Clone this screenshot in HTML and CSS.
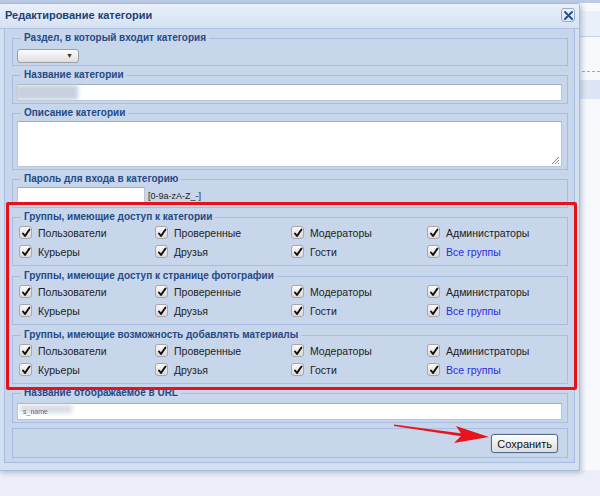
FILE: index.html
```html
<!DOCTYPE html>
<html>
<head>
	<title>Редактирование категории</title>
	<meta charset="utf-8">
	<link rel="stylesheet" href="styles.css">
</head>
<body>

	<!-- page behind the dialog -->
	<div class="page">
		<div class="page__top"></div>
		<div class="page__gap"></div>
		<div class="page__head"></div>
		<div class="page__white"></div>
		<div class="page__dash"></div>
		<div class="page__gap"></div>
		<div class="page__band"></div>
		<div class="page__rest"></div>
	</div>

	<div class="dialog">
		<div class="dialog__title">
			Редактирование категории
			<span class="dialog__close">
				<svg width="9" height="9" viewBox="0 0 9 9"><path d="M1 1 L8 8 M8 1 L1 8" stroke="#284f8c" stroke-width="2" stroke-linecap="round"/></svg>
			</span>
		</div>

		<div class="dialog__body">

			<fieldset class="fs">
				<legend>Раздел, в который входит категория</legend>
				<div class="select"><span class="select__arrow">&#9660;</span></div>
			</fieldset>

			<fieldset class="fs">
				<legend>Название категории</legend>
				<div class="input input--wide"><span class="blur blur--name"></span></div>
			</fieldset>

			<fieldset class="fs">
				<legend>Описание категории</legend>
				<div class="textarea">
					<svg class="grip" width="9" height="9" viewBox="0 0 9 9"><path d="M8 1 L1 8 M8 4 L4 8 M8 7 L7 8" stroke="#8a8a8a" stroke-width="1"/></svg>
				</div>
			</fieldset>

			<fieldset class="fs fs--pass">
				<legend>Пароль для входа в категорию</legend>
				<div class="row">
					<div class="input input--short"></div>
					<span class="hint">[0-9a-zA-Z_-]</span>
				</div>
			</fieldset>

			<fieldset class="fs fs--groups">
				<legend>Группы, имеющие доступ к категории</legend>
				<div class="groups">
					<label class="chk"><span class="chk__box"><svg width="10" height="10" viewBox="0 0 10 10"><path d="M2 5.5 L4 8 L8.5 1.5" fill="none" stroke="#111" stroke-width="2" stroke-linecap="round" stroke-linejoin="round"/></svg></span>Пользователи</label>
					<label class="chk"><span class="chk__box"><svg width="10" height="10" viewBox="0 0 10 10"><path d="M2 5.5 L4 8 L8.5 1.5" fill="none" stroke="#111" stroke-width="2" stroke-linecap="round" stroke-linejoin="round"/></svg></span>Проверенные</label>
					<label class="chk"><span class="chk__box"><svg width="10" height="10" viewBox="0 0 10 10"><path d="M2 5.5 L4 8 L8.5 1.5" fill="none" stroke="#111" stroke-width="2" stroke-linecap="round" stroke-linejoin="round"/></svg></span>Модераторы</label>
					<label class="chk"><span class="chk__box"><svg width="10" height="10" viewBox="0 0 10 10"><path d="M2 5.5 L4 8 L8.5 1.5" fill="none" stroke="#111" stroke-width="2" stroke-linecap="round" stroke-linejoin="round"/></svg></span>Администраторы</label>
					<label class="chk"><span class="chk__box"><svg width="10" height="10" viewBox="0 0 10 10"><path d="M2 5.5 L4 8 L8.5 1.5" fill="none" stroke="#111" stroke-width="2" stroke-linecap="round" stroke-linejoin="round"/></svg></span>Курьеры</label>
					<label class="chk"><span class="chk__box"><svg width="10" height="10" viewBox="0 0 10 10"><path d="M2 5.5 L4 8 L8.5 1.5" fill="none" stroke="#111" stroke-width="2" stroke-linecap="round" stroke-linejoin="round"/></svg></span>Друзья</label>
					<label class="chk"><span class="chk__box"><svg width="10" height="10" viewBox="0 0 10 10"><path d="M2 5.5 L4 8 L8.5 1.5" fill="none" stroke="#111" stroke-width="2" stroke-linecap="round" stroke-linejoin="round"/></svg></span>Гости</label>
					<label class="chk chk--all"><span class="chk__box"><svg width="10" height="10" viewBox="0 0 10 10"><path d="M2 5.5 L4 8 L8.5 1.5" fill="none" stroke="#111" stroke-width="2" stroke-linecap="round" stroke-linejoin="round"/></svg></span>Все группы</label>
				</div>
			</fieldset>

			<fieldset class="fs fs--groups">
				<legend>Группы, имеющие доступ к странице фотографии</legend>
				<div class="groups">
					<label class="chk"><span class="chk__box"><svg width="10" height="10" viewBox="0 0 10 10"><path d="M2 5.5 L4 8 L8.5 1.5" fill="none" stroke="#111" stroke-width="2" stroke-linecap="round" stroke-linejoin="round"/></svg></span>Пользователи</label>
					<label class="chk"><span class="chk__box"><svg width="10" height="10" viewBox="0 0 10 10"><path d="M2 5.5 L4 8 L8.5 1.5" fill="none" stroke="#111" stroke-width="2" stroke-linecap="round" stroke-linejoin="round"/></svg></span>Проверенные</label>
					<label class="chk"><span class="chk__box"><svg width="10" height="10" viewBox="0 0 10 10"><path d="M2 5.5 L4 8 L8.5 1.5" fill="none" stroke="#111" stroke-width="2" stroke-linecap="round" stroke-linejoin="round"/></svg></span>Модераторы</label>
					<label class="chk"><span class="chk__box"><svg width="10" height="10" viewBox="0 0 10 10"><path d="M2 5.5 L4 8 L8.5 1.5" fill="none" stroke="#111" stroke-width="2" stroke-linecap="round" stroke-linejoin="round"/></svg></span>Администраторы</label>
					<label class="chk"><span class="chk__box"><svg width="10" height="10" viewBox="0 0 10 10"><path d="M2 5.5 L4 8 L8.5 1.5" fill="none" stroke="#111" stroke-width="2" stroke-linecap="round" stroke-linejoin="round"/></svg></span>Курьеры</label>
					<label class="chk"><span class="chk__box"><svg width="10" height="10" viewBox="0 0 10 10"><path d="M2 5.5 L4 8 L8.5 1.5" fill="none" stroke="#111" stroke-width="2" stroke-linecap="round" stroke-linejoin="round"/></svg></span>Друзья</label>
					<label class="chk"><span class="chk__box"><svg width="10" height="10" viewBox="0 0 10 10"><path d="M2 5.5 L4 8 L8.5 1.5" fill="none" stroke="#111" stroke-width="2" stroke-linecap="round" stroke-linejoin="round"/></svg></span>Гости</label>
					<label class="chk chk--all"><span class="chk__box"><svg width="10" height="10" viewBox="0 0 10 10"><path d="M2 5.5 L4 8 L8.5 1.5" fill="none" stroke="#111" stroke-width="2" stroke-linecap="round" stroke-linejoin="round"/></svg></span>Все группы</label>
				</div>
			</fieldset>

			<fieldset class="fs fs--groups">
				<legend>Группы, имеющие возможность добавлять материалы</legend>
				<div class="groups">
					<label class="chk"><span class="chk__box"><svg width="10" height="10" viewBox="0 0 10 10"><path d="M2 5.5 L4 8 L8.5 1.5" fill="none" stroke="#111" stroke-width="2" stroke-linecap="round" stroke-linejoin="round"/></svg></span>Пользователи</label>
					<label class="chk"><span class="chk__box"><svg width="10" height="10" viewBox="0 0 10 10"><path d="M2 5.5 L4 8 L8.5 1.5" fill="none" stroke="#111" stroke-width="2" stroke-linecap="round" stroke-linejoin="round"/></svg></span>Проверенные</label>
					<label class="chk"><span class="chk__box"><svg width="10" height="10" viewBox="0 0 10 10"><path d="M2 5.5 L4 8 L8.5 1.5" fill="none" stroke="#111" stroke-width="2" stroke-linecap="round" stroke-linejoin="round"/></svg></span>Модераторы</label>
					<label class="chk"><span class="chk__box"><svg width="10" height="10" viewBox="0 0 10 10"><path d="M2 5.5 L4 8 L8.5 1.5" fill="none" stroke="#111" stroke-width="2" stroke-linecap="round" stroke-linejoin="round"/></svg></span>Администраторы</label>
					<label class="chk"><span class="chk__box"><svg width="10" height="10" viewBox="0 0 10 10"><path d="M2 5.5 L4 8 L8.5 1.5" fill="none" stroke="#111" stroke-width="2" stroke-linecap="round" stroke-linejoin="round"/></svg></span>Курьеры</label>
					<label class="chk"><span class="chk__box"><svg width="10" height="10" viewBox="0 0 10 10"><path d="M2 5.5 L4 8 L8.5 1.5" fill="none" stroke="#111" stroke-width="2" stroke-linecap="round" stroke-linejoin="round"/></svg></span>Друзья</label>
					<label class="chk"><span class="chk__box"><svg width="10" height="10" viewBox="0 0 10 10"><path d="M2 5.5 L4 8 L8.5 1.5" fill="none" stroke="#111" stroke-width="2" stroke-linecap="round" stroke-linejoin="round"/></svg></span>Гости</label>
					<label class="chk chk--all"><span class="chk__box"><svg width="10" height="10" viewBox="0 0 10 10"><path d="M2 5.5 L4 8 L8.5 1.5" fill="none" stroke="#111" stroke-width="2" stroke-linecap="round" stroke-linejoin="round"/></svg></span>Все группы</label>
				</div>
			</fieldset>

			<fieldset class="fs fs--url">
				<legend>Название отображаемое в URL</legend>
				<div class="input input--wide input--url"><span class="blur blur--url"></span><span class="url-text">s_name</span></div>
			</fieldset>

			<fieldset class="fs fs--buttons">
				<button class="btn" type="button">Сохранить</button>
			</fieldset>

		</div>
	</div>

	<!-- annotations over the screenshot -->
	<div class="mark"></div>
	<svg class="arrow" width="110" height="30" viewBox="0 0 110 30">
		<path d="M2 1.5 L74 11 L74 14 L2 3 Z" fill="#e8141b"/>
		<path d="M64 3 L97 14 L62 20 L70 12 Z" fill="#e8141b"/>
	</svg>

</body>
</html>
```

FILE: styles.css
```css
/* * {outline: 1px solid red;} */

body {
	margin: 0;
	background: #eceff8;
	font-family: "Liberation Sans", Arial, sans-serif;
	font-size: 11px;
	color: #222;
	overflow: hidden;
}

/* page behind the dialog */

.page {
	height: 470px;
	background: #f7f9fd;
}
.page__top {
	height: 3px;
	background: #bccbe6;
}
.page__gap {
	height: 8px;
}
.page__head {
	height: 25px;
	background: #eaf0f9;
	border-bottom: 1px solid #c4d2ea;
}
.page__white {
	height: 34px;
}
.page__dash {
	border-top: 1px dashed #a8a8a8;
}
.page__band {
	height: 19px;
	background: #dde6f4;
}

/* dialog */

.dialog {
	position: absolute;
	left: -2px;
	top: 3px;
	width: 580px;
	background: #d3e0f2;
	border: 1px solid #a6bcdf;
	border-radius: 2px;
	box-shadow: 2px 2px 5px rgba(60, 80, 120, 0.3);
}
.dialog__title {
	height: 24px;
	line-height: 22px;
	padding-left: 6px;
	font-size: 11px;
	font-weight: bold;
	color: #1d3f77;
	background: linear-gradient(#e8eff9, #d6e2f3);
	border-bottom: 1px solid #aec3e3;
	position: relative;
}
.dialog__close {
	position: absolute;
	right: 4px;
	top: 4px;
	width: 12px;
	height: 12px;
	border: 1px solid #94acd4;
	border-radius: 3px;
	background: linear-gradient(#f3f6fb, #dbe5f3);
	display: flex;
	align-items: center;
	justify-content: center;
}
.dialog__body {
	margin: 0 4px 7px 5px;
	padding: 3px 6px 4px 7px;
	background: #c8d6eb;
	border: 1px solid #a9bde0;
	border-top: none;
}

/* fieldsets */

.fs {
	margin: 0 0 3px;
	padding: 0 5px 2px 4px;
	border: 1px solid #a8bde0;
	min-width: 0;
}
.fs legend {
	padding: 0 3px;
	margin-left: 4px;
	font-size: 10px;
	line-height: 12px;
	font-weight: bold;
	color: #234a86;
}
.fs--pass {
	padding-bottom: 3px;
}
.fs--groups {
	margin-bottom: 4px;
	padding-bottom: 4px;
}
.fs--url {
	margin-top: -1px;
	padding-bottom: 2px;
}
.fs--buttons {
	margin: 5px 0 0;
	padding: 5px 9px 4px 4px;
	text-align: right;
}

.select {
	margin-top: 5px;
	width: 60px;
	height: 12px;
	border: 1px solid #9a9fa8;
	border-radius: 3px;
	background: linear-gradient(#fdfdfd, #dedede);
	position: relative;
}
.select__arrow {
	position: absolute;
	right: 5px;
	top: 2px;
	font-size: 7px;
	line-height: 8px;
	color: #333;
}

.input {
	height: 15px;
	background: #fff;
	border: 1px solid #b9c5d8;
	border-top-color: #9fadc4;
	position: relative;
}
.input--wide {
	margin-top: 3px;
}
.input--url {
	margin-top: 4px;
}
.input--short {
	width: 126px;
}
.blur {
	position: absolute;
	top: 0;
	height: 15px;
	background: #d5dbe5;
	filter: blur(2px);
}
.blur--name {
	left: -2px;
	width: 62px;
	background: #c6d0de;
}
.blur--url {
	left: 2px;
	width: 52px;
	top: 1px;
	height: 8px;
	background: #d7dbe3;
}
.url-text {
	position: absolute;
	left: 5px;
	top: 4px;
	font-size: 7px;
	color: #666;
	filter: blur(0.6px);
}

.textarea {
	margin-top: 2px;
	height: 44px;
	background: #fff;
	border: 1px solid #b9c5d8;
	border-top-color: #9fadc4;
	position: relative;
}
.grip {
	position: absolute;
	right: 1px;
	bottom: 1px;
}

.row {
	display: flex;
	align-items: center;
	margin-top: 2px;
}
.hint {
	margin-left: 3px;
	font-size: 9px;
	color: #222;
}

/* checkbox grid */

.groups {
	display: grid;
	grid-template-columns: repeat(4, 136px);
	padding-left: 2px;
}
.chk {
	display: flex;
	align-items: center;
	height: 19px;
	font-size: 10.5px;
	color: #222;
}
.chk__box {
	width: 11px;
	height: 11px;
	margin-right: 6px;
	border: 1px solid #a7a7a7;
	border-radius: 3px;
	background: linear-gradient(#fbfbfb, #d9d9d9);
	display: flex;
	align-items: center;
	justify-content: center;
}
.chk--all {
	color: #2a2be0;
}

.btn {
	height: 19px;
	padding: 0 5px;
	font-family: "Liberation Sans", Arial, sans-serif;
	font-size: 11px;
	color: #111;
	border: 1px solid #55698c;
	border-radius: 3px;
	background: linear-gradient(#ffffff, #dcdcdc);
	box-shadow: 0 0 0 1px #bccbe3;
}

/* annotations */

.mark {
	position: absolute;
	left: 6px;
	top: 202px;
	width: 565px;
	height: 182px;
	border: 3px solid #e5121b;
	border-radius: 2px;
}
.arrow {
	position: absolute;
	left: 392px;
	top: 423px;
}
```
